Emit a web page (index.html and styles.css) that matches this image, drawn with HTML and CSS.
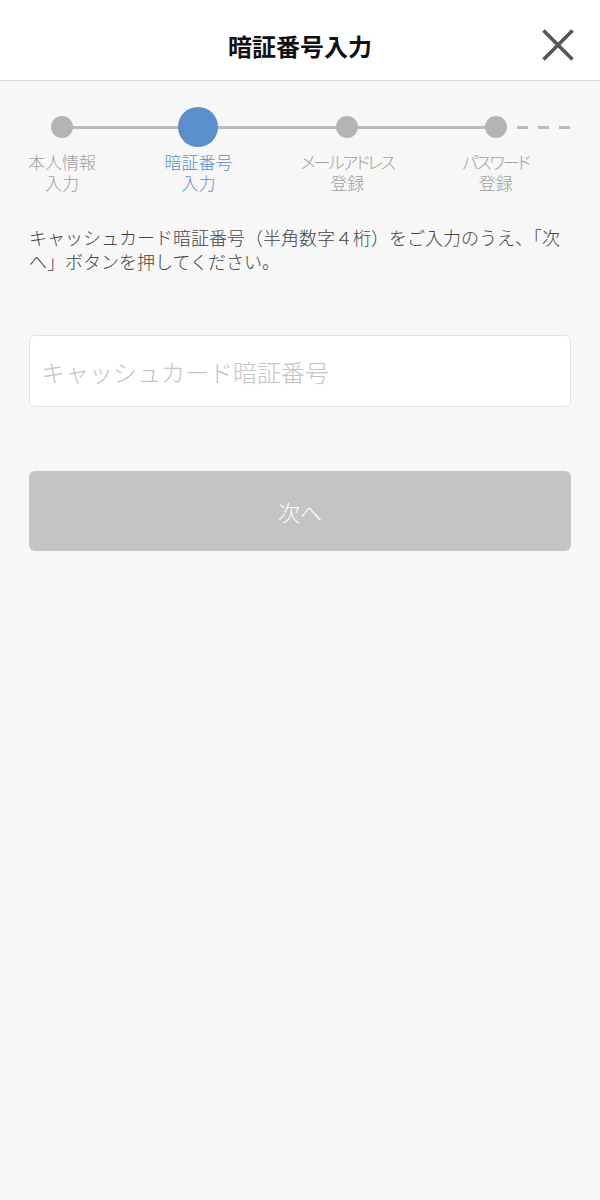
FILE: index.html
```html
<!DOCTYPE html>
<html lang="ja">
<head>
    <meta charset="UTF-8">
    <meta name="viewport" content="width=device-width, initial-scale=1.0">
    <title>暗証番号入力</title>
    <link rel="stylesheet" href="styles.css">
</head>
<body>

    <header class="header">
        <h1 class="header-title">暗証番号入力</h1>
        <button class="close-btn" type="button" aria-label="閉じる">
            <svg width="32" height="32" viewBox="0 0 32 32">
                <path d="M1.5 1.5 L30.5 30.5 M30.5 1.5 L1.5 30.5" stroke="#555" stroke-width="3.6" fill="none"/>
            </svg>
        </button>
    </header>

    <main class="content">
        <!-- Progress steps -->
        <ol class="stepper">
            <li class="step">
                <span class="step-dot"></span>
                <span class="step-label">本人情報<br>入力</span>
            </li>
            <li class="step is-current">
                <span class="step-dot"></span>
                <span class="step-label">暗証番号<br>入力</span>
            </li>
            <li class="step">
                <span class="step-dot"></span>
                <span class="step-label"><span class="kana">メールアドレス</span><br>登録</span>
            </li>
            <li class="step">
                <span class="step-dot"></span>
                <span class="step-label"><span class="kana">パスワード</span><br>登録</span>
            </li>
        </ol>

        <p class="guide">キャッシュカード暗証番号（半角数字４桁）をご入力のうえ、「次へ」ボタンを押してください。</p>

        <form class="pin-form">
            <input class="pin-input" type="password" inputmode="numeric" maxlength="4" placeholder="キャッシュカード暗証番号">
            <button class="next-btn" type="submit" disabled>次へ</button>
        </form>
    </main>

</body>
</html>
```

FILE: styles.css
```css
/* Reset */
* {
    margin: 0;
    padding: 0;
    box-sizing: border-box;
}

body {
    font-family: "Noto Sans CJK JP", "Noto Sans", sans-serif;
    font-weight: 300;
    background-color: #f7f7f7;
    color: #333;
    min-height: 1200px;
}

/* Header */
.header {
    height: 81px;
    padding-top: 10px;
    background-color: #fff;
    border-bottom: 1px solid #dcdcdc;
    display: grid;
    grid-template-columns: 1fr auto 1fr;
    align-items: center;
}

.header-title {
    grid-column: 2;
    font-size: 24px;
    font-weight: 700;
    color: #111;
}

.close-btn {
    justify-self: end;
    margin-right: 26px;
    width: 32px;
    height: 32px;
    display: flex;
    background: none;
    border: none;
    cursor: pointer;
}

/* Content */
.content {
    padding: 0 29px;
}

/* Stepper */
.stepper {
    list-style: none;
    position: relative;
    display: flex;
    justify-content: space-between;
    margin: 26px 42px 0 -1px;
}

.stepper::before {
    content: "";
    position: absolute;
    top: 18.5px;
    left: 34px;
    right: 33px;
    height: 3px;
    background-color: #bbb;
}

.stepper::after {
    content: "";
    position: absolute;
    top: 18.5px;
    left: calc(100% - 12px);
    width: 53px;
    height: 3px;
    background: repeating-linear-gradient(to right, #bbb 0 11px, transparent 11px 21px);
}

.step {
    display: flex;
    flex-direction: column;
    align-items: center;
}

.step-dot {
    position: relative;
    z-index: 1;
    width: 22px;
    height: 22px;
    margin: 9px 0;
    border-radius: 50%;
    background-color: #b4b4b4;
}

.step.is-current .step-dot {
    width: 40px;
    height: 40px;
    margin: 0;
    background-color: #5a8fcc;
}

.step-label {
    margin-top: 4px;
    font-size: 17px;
    line-height: 21px;
    color: #a0a0a0;
    text-align: center;
    white-space: nowrap;
}

.step-label .kana {
    font-feature-settings: "palt";
    letter-spacing: -2px;
}

.step.is-current .step-label {
    color: #5a8fcc;
}

/* Guide text */
.guide {
    margin-top: 32px;
    font-size: 18px;
    line-height: 24px;
    color: #444;
}

/* Form */
.pin-input {
    display: block;
    width: 100%;
    height: 72px;
    margin-top: 62px;
    padding: 0 11px;
    font-family: inherit;
    font-weight: 300;
    font-size: 24px;
    background-color: #fff;
    border: 1px solid #e3e3e3;
    border-radius: 6px;
    outline: none;
}

.pin-input::placeholder {
    color: #c4c4c4;
}

.next-btn {
    display: block;
    width: 100%;
    height: 80px;
    margin-top: 64px;
    font-family: inherit;
    font-weight: 300;
    font-size: 22px;
    color: #fff;
    background-color: #c4c4c4;
    border: none;
    border-radius: 6px;
}
```
